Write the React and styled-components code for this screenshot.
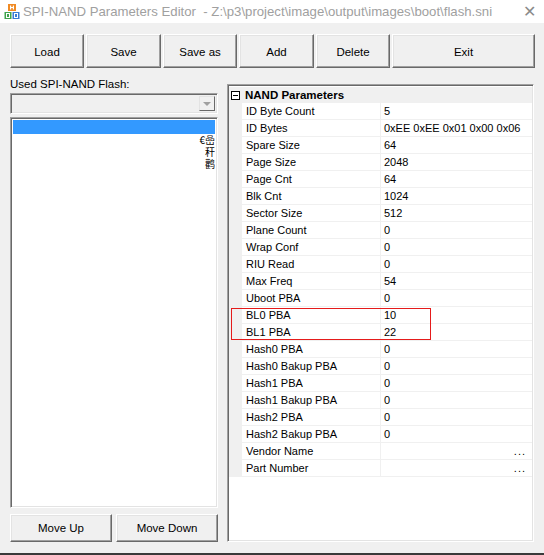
import React from 'react';
import styled, { createGlobalStyle } from 'styled-components';

const Global = createGlobalStyle`
  html, body { margin:0; padding:0; background:#f0f0f0; }
  body { width:544px; height:555px; overflow:hidden; font-family:"Liberation Sans", Arial, sans-serif; font-size:11px; color:#000; }
`;

const Win = styled.div`
  width:544px;
  height:555px;
  display:flex;
  flex-direction:column;
  background:#f0f0f0;
`;

const TitleBar = styled.div`
  height:23px;
  background:#fff;
  display:flex;
  align-items:center;
  padding-left:4px;
  color:#a0a0a0;
  font-size:13.2px;
  white-space:nowrap;
`;

const TitleText = styled.span`
  margin-left:3px;
  flex:1;
`;

const Close = styled.span`
  width:28px;
  text-align:center;
  font-size:16px;
  color:#8a8a8a;
  margin-right:1px;
`;

const Body = styled.div`
  flex:1;
  display:flex;
  flex-direction:column;
`;

const Toolbar = styled.div`
  display:flex;
  gap:2px;
  margin:11px 0 0 10px;
`;

const Btn = styled.button`
  width:${p => p.w}px;
  height:${p => p.h || 34}px;
  background:#f0f0f0;
  border:1px solid;
  border-color:#fff #696969 #696969 #fff;
  box-shadow:inset -1px -1px #a0a0a0, inset 1px 1px #e3e3e3;
  font-family:"Liberation Sans", Arial, sans-serif;
  font-size:11.5px;
  color:#000;
  padding:${p => (p.h ? 0 : '1px 0 0 0')};
`;

const Main = styled.div`
  display:flex;
  margin:10px 0 0 10px;
`;

const LeftCol = styled.div`
  width:208px;
  display:flex;
  flex-direction:column;
`;

const Label = styled.div`
  height:13px;
  line-height:13px;
  margin-bottom:2px;
  font-size:11.5px;
`;

const Sunken = styled.div`
  border:1px solid;
  border-color:#a0a0a0 #fff #fff #a0a0a0;
  box-shadow:inset 1px 1px #696969, inset -1px -1px #e3e3e3;
`;

const Combo = styled(Sunken)`
  height:21px;
  box-sizing:border-box;
  background:#f0f0f0;
  display:flex;
  justify-content:flex-end;
  padding:2px;
`;

const ComboArrow = styled.div`
  width:16px;
  height:15px;
  box-sizing:border-box;
  border:1px solid;
  border-color:#e3e3e3 #696969 #696969 #e3e3e3;
  display:flex;
  align-items:center;
  justify-content:center;
  &::after {
    content:"";
    border-left:4px solid transparent;
    border-right:4px solid transparent;
    border-top:4px solid #a0a0a0;
  }
`;

const List = styled(Sunken)`
  margin-top:3px;
  height:391px;
  box-sizing:border-box;
  background:#fff;
  padding:2px;
  overflow:hidden;
`;

const SelRow = styled.div`
  height:14px;
  background:#3399ff;
`;

const Garble = styled.div`
  text-align:right;
  height:12px;
  line-height:12px;
  overflow:hidden;
  font-family:"Noto Sans CJK SC", sans-serif;
  font-size:10px;
  white-space:nowrap;
`;

const MoveRow = styled.div`
  display:flex;
  gap:4px;
  margin-top:6px;
`;

const RightCol = styled.div`
  margin:6px 0 0 9px;
  width:307px;
  height:458px;
  position:relative;
`;

const Grid = styled(Sunken)`
  height:100%;
  box-sizing:border-box;
  background:#fff;
  padding:2px 1px 0 1px;
`;

const Header = styled.div`
  height:16px;
  background:#f0f0f0;
  display:flex;
  align-items:center;
`;

const Toggle = styled.div`
  width:9px;
  height:9px;
  box-sizing:border-box;
  border:1px solid #000;
  margin:0 5px 0 2px;
  display:flex;
  align-items:center;
  justify-content:center;
  background:#fff;
  &::after {
    content:"";
    width:5px;
    height:1px;
    background:#000;
  }
`;

const HeaderText = styled.span`
  font-weight:bold;
  font-size:11.5px;
`;

const Row = styled.div`
  display:grid;
  grid-template-columns:13px 138px 1fr;
  height:17px;
`;

const Gutter = styled.div`
  background:#f0f0f0;
`;

const Cell = styled.div`
  border-bottom:1px solid #f0f0f0;
  border-left:${p => (p.value ? '1px solid #f0f0f0' : 'none')};
  padding-left:${p => (p.value ? 3 : 4)}px;
  line-height:17px;
  font-size:11px;
  white-space:nowrap;
  overflow:hidden;
  display:flex;
  justify-content:space-between;
  padding-right:6px;
`;

const Dots = styled.span`
  letter-spacing:1px;
`;

const Mark = styled.div`
  position:absolute;
  left:4px;
  top:224px;
  width:200px;
  height:32px;
  box-sizing:border-box;
  border:1px solid #e51b1b;
  pointer-events:none;
`;

const Desk = styled.div`
  height:2px;
  background:#3a3a3a;
`;

const Icon = () => (
  <svg width="16" height="17" viewBox="0 0 16 17">
    <rect x="4" y="1" width="8" height="7" fill="#f08a24" />
    <rect x="6" y="2.5" width="1.2" height="4" fill="#fff" />
    <rect x="8.8" y="2.5" width="1.2" height="4" fill="#fff" />
    <rect x="6" y="4" width="4" height="1" fill="#fff" />
    <rect x="0.5" y="9" width="7" height="7" fill="#3fa34d" />
    <rect x="8.5" y="9" width="7" height="7" fill="#3a7bd5" />
    <rect x="2.5" y="10.5" width="3" height="4" fill="none" stroke="#fff" strokeWidth="1" />
    <rect x="10.5" y="10.5" width="3" height="4" fill="none" stroke="#fff" strokeWidth="1" />
  </svg>
);

const params = [
  ['ID Byte Count', '5'],
  ['ID Bytes', '0xEE 0xEE 0x01 0x00 0x06'],
  ['Spare Size', '64'],
  ['Page Size', '2048'],
  ['Page Cnt', '64'],
  ['Blk Cnt', '1024'],
  ['Sector Size', '512'],
  ['Plane Count', '0'],
  ['Wrap Conf', '0'],
  ['RIU Read', '0'],
  ['Max Freq', '54'],
  ['Uboot PBA', '0'],
  ['BL0 PBA', '10'],
  ['BL1 PBA', '22'],
  ['Hash0 PBA', '0'],
  ['Hash0 Bakup PBA', '0'],
  ['Hash1 PBA', '0'],
  ['Hash1 Bakup PBA', '0'],
  ['Hash2 PBA', '0'],
  ['Hash2 Bakup PBA', '0'],
  ['Vendor Name', null],
  ['Part Number', null],
];

const tools = [['Load', 74], ['Save', 75], ['Save as', 74], ['Add', 75], ['Delete', 74], ['Exit', 143]];

export default function App() {
  return (
    <>
      <Global />
      <Win>
        <TitleBar>
          <Icon />
          <TitleText>SPI-NAND Parameters Editor&nbsp; - Z:\p3\project\image\output\images\boot\flash.sni</TitleText>
          <Close>✕</Close>
        </TitleBar>
        <Body>
          <Toolbar>
            {tools.map(([t, w]) => <Btn key={t} w={w}>{t}</Btn>)}
          </Toolbar>
          <Main>
            <LeftCol>
              <Label>Used SPI-NAND Flash:</Label>
              <Combo><ComboArrow /></Combo>
              <List>
                <SelRow />
                <Garble>€嵒</Garble>
                <Garble>秆</Garble>
                <Garble>鹳</Garble>
              </List>
              <MoveRow>
                <Btn w={102} h={28}>Move Up</Btn>
                <Btn w={102} h={28}>Move Down</Btn>
              </MoveRow>
            </LeftCol>
            <RightCol>
              <Grid>
                <Header>
                  <Toggle />
                  <HeaderText>NAND Parameters</HeaderText>
                </Header>
                {params.map(([k, v]) => (
                  <Row key={k}>
                    <Gutter />
                    <Cell>{k}</Cell>
                    <Cell value>
                      {v === null ? <><span /><Dots>...</Dots></> : v}
                    </Cell>
                  </Row>
                ))}
              </Grid>
              <Mark />
            </RightCol>
          </Main>
        </Body>
        <Desk />
      </Win>
    </>
  );
}
